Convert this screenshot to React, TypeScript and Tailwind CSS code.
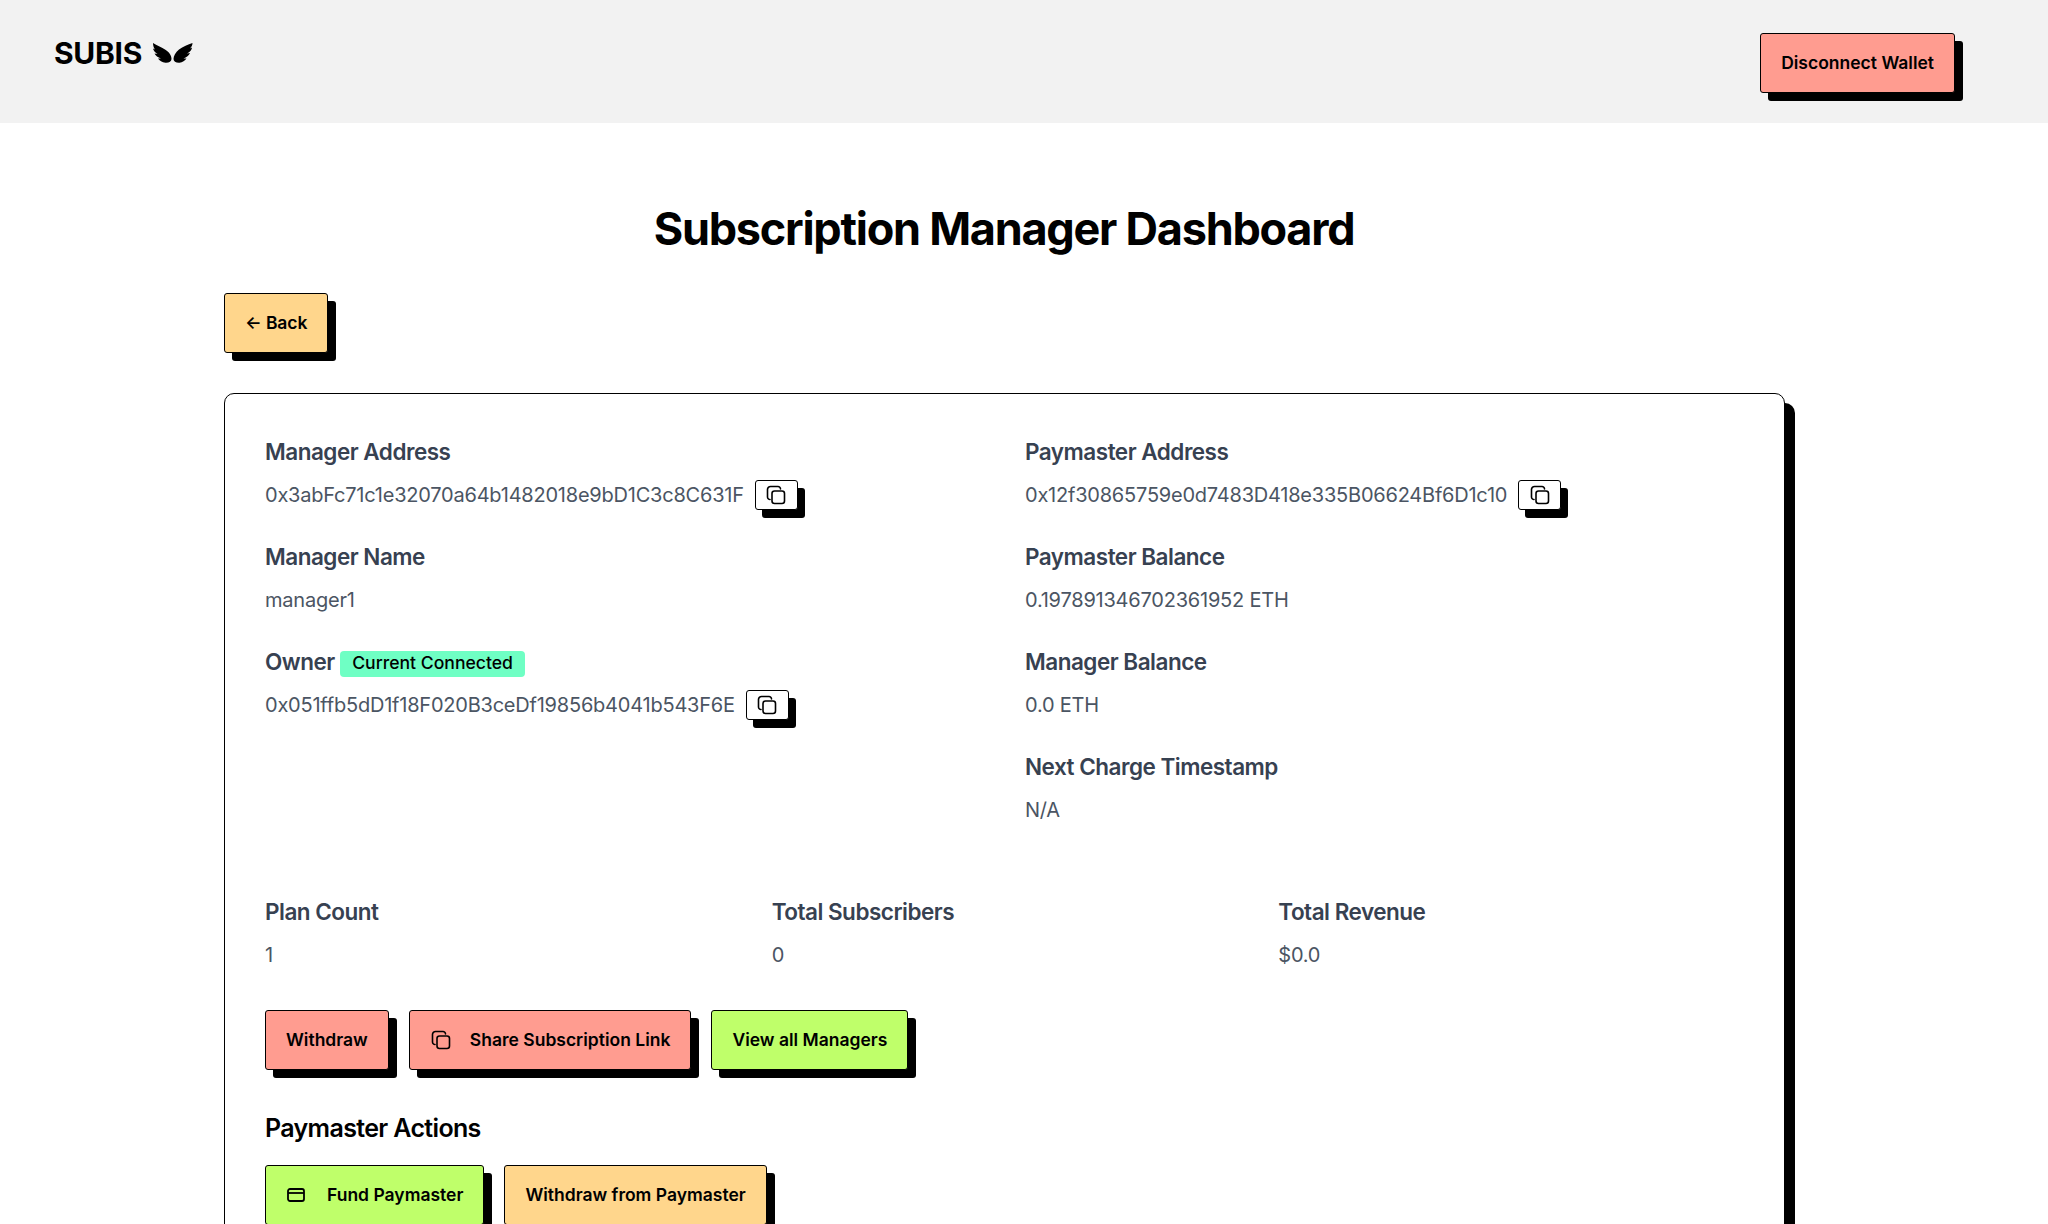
import React from 'react';

const font = "font-['Inter',sans-serif]";

const CopyIcon = () => (
  <svg width="22" height="22" viewBox="0 0 22 22" fill="none" stroke="currentColor" strokeWidth="1.6" strokeLinecap="round" strokeLinejoin="round">
    <rect x="7" y="7" width="12.500" height="12.500" rx="2.500" />
    <path d="M5 15.500A2.500 2.500 0 0 1 2.500 13V5.500A3 3 0 0 1 5.500 2.500H13A2.500 2.500 0 0 1 15.500 5" />
  </svg>
);

const CardIcon = () => (
  <svg width="20" height="20" viewBox="0 0 20 20" fill="none" stroke="currentColor" strokeWidth="1.8" strokeLinejoin="round">
    <rect x="2" y="4" width="16" height="12" rx="2" />
    <path d="M2 8h16" />
  </svg>
);

const Wings = () => (
  <svg width="41" height="21" viewBox="0 0 41 21" fill="currentColor">
    <path d="M1 1C5 3.500 9 5 13 7.500C17 10 19.500 13 19.500 17C19.500 19.500 17 21 13.500 20.800C10 20.500 7.500 18.500 6 16.500L9 16.500C6 15.500 3.500 13.500 2.500 11.500L5.500 12C3 10.500 1.500 8.500 1 6.500L3 7.500C1.500 5.500 1 3 1 1Z" />
    <path d="M40.500 1C36 2.500 31 4.500 27 7.500C23.500 10.500 21.500 14 21.500 17C21.500 19.500 24 21 27.500 20.800C30.500 20.500 33 18.500 34.500 16.500L31.500 16.500C34.500 15.500 37 13.500 38 11L35 11.500C38 10 40 7.500 40 5.500L38 6.500C39.500 5 40.500 3 40.500 1Z" />
  </svg>
);

const Btn: React.FC<{ color: string; className?: string; children: React.ReactNode }> = ({ color, className = '', children }) => (
  <button className={`${color} ${className} h-[60px] px-[20px] flex items-center rounded-[3px] border-[1.5px] border-black shadow-[8px_8px_0_0_#000] text-[17.500px] font-semibold text-black whitespace-nowrap`}>
    {children}
  </button>
);

const CopyBtn = () => (
  <button className="w-[43px] h-[30px] flex items-center justify-center bg-white rounded-[3px] border-[1.5px] border-black shadow-[7px_8px_0_0_#000] text-black">
    <CopyIcon />
  </button>
);

const Field: React.FC<{ label: React.ReactNode; value: string; copy?: boolean }> = ({ label, value, copy }) => (
  <div className="h-[105px]">
    <div className="h-[30px] flex items-center gap-[5px] text-[22.500px] tracking-[-0.5px] font-semibold text-[#374151]">{label}</div>
    <div className="mt-[13px] h-[30px] flex items-center gap-[11px] text-[20px] tracking-[-0.22px] text-[#4b5563]">
      <span>{value}</span>
      {copy && <CopyBtn />}
    </div>
  </div>
);

const App: React.FC = () => {
  return (
    <div className={`${font} h-[1224px] overflow-hidden bg-white text-black`}>
      <header className="h-[123px] bg-[#f2f2f2] flex justify-between pl-[54px] pr-[93px]">
        <div className="flex items-start gap-[10px] pt-[35px]">
          <span className="text-[30px] leading-[36px] font-bold tracking-[-0.3px]">SUBIS</span>
          <span className="pt-[7px]"><Wings /></span>
        </div>
        <div className="pt-[33px]">
          <Btn color="bg-[#ff9c90]">Disconnect Wallet</Btn>
        </div>
      </header>

      <main className="px-[224px]">
        <h1 className="pt-[72px] text-center text-[45px] leading-[68px] tracking-[-1.25px] font-bold pr-[40px]">Subscription Manager Dashboard</h1>
        <div className="mt-[30px]">
          <Btn color="bg-[#ffd68c]" className="tracking-[-0.1px]">← Back</Btn>
        </div>

        <section className="mt-[40px] w-[1561px] h-[1000px] rounded-[10px] border-[1.5px] border-black bg-white shadow-[10px_10px_0_0_#000] px-[40px] pt-[43px]">
          <div className="grid grid-cols-2 gap-x-[41px]">
            <div>
              <Field label="Manager Address" value="0x3abFc71c1e32070a64b1482018e9bD1C3c8C631F" copy />
              <Field label="Manager Name" value="manager1" />
              <Field
                label={
                  <>
                    <span>Owner</span>
                    <span className="px-[12.500px] h-[26px] mt-[3px] flex items-center rounded-[4px] bg-[#6fffc4] text-[17.600px] tracking-normal font-medium text-black">Current Connected</span>
                  </>
                }
                value="0x051ffb5dD1f18F020B3ceDf19856b4041b543F6E"
                copy
              />
            </div>
            <div>
              <Field label="Paymaster Address" value="0x12f30865759e0d7483D418e335B06624Bf6D1c10" copy />
              <Field label="Paymaster Balance" value="0.197891346702361952 ETH" />
              <Field label="Manager Balance" value="0.0 ETH" />
              <Field label="Next Charge Timestamp" value="N/A" />
            </div>
          </div>

          <div className="mt-[40px] grid grid-cols-3 gap-x-[41px]">
            <Field label="Plan Count" value="1" />
            <Field label="Total Subscribers" value="0" />
            <Field label="Total Revenue" value="$0.0" />
          </div>

          <div className="mt-[8px] flex gap-[20px]">
            <Btn color="bg-[#ff9c90]">Withdraw</Btn>
            <Btn color="bg-[#ff9c90]" className="gap-[18px]"><CopyIcon />Share Subscription Link</Btn>
            <Btn color="bg-[#bfff6a]">View all Managers</Btn>
          </div>

          <h2 className="mt-[41px] text-[25px] leading-[34px] tracking-[-0.65px] font-semibold">Paymaster Actions</h2>

          <div className="mt-[20px] flex gap-[20px]">
            <Btn color="bg-[#bfff6a]" className="gap-[21px]"><CardIcon />Fund Paymaster</Btn>
            <Btn color="bg-[#ffd68c]">Withdraw from Paymaster</Btn>
          </div>
        </section>
      </main>
    </div>
  );
};

export default App;
